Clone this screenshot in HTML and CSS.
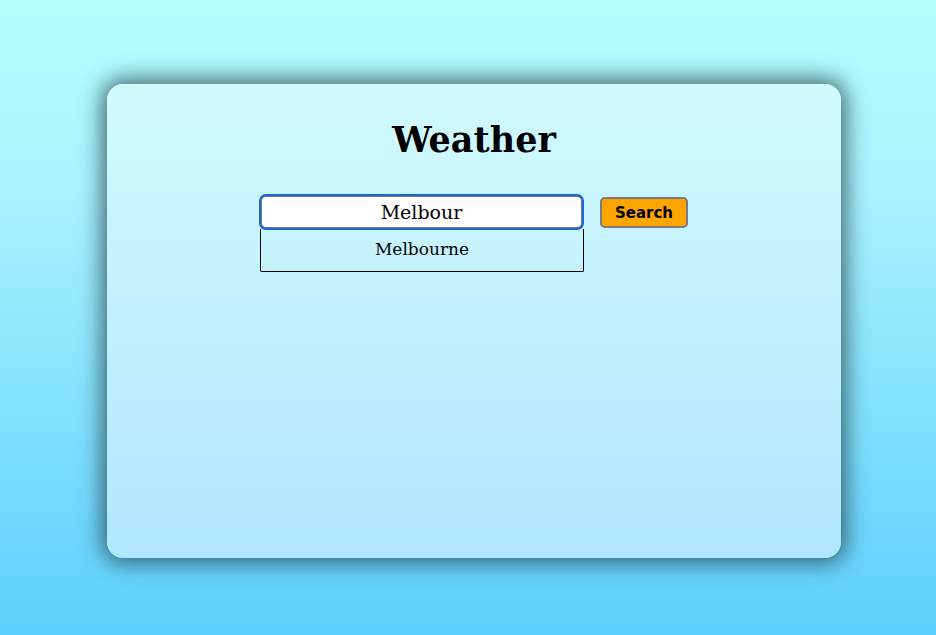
FILE: index.html
```html
<!DOCTYPE html>
<html lang="en">
<head>
<meta charset="utf-8">
<title>Weather</title>
<link rel="stylesheet" href="styles.css">
</head>
<body>
<main class="card">
  <h1 class="title">Weather</h1>
  <div class="search-row">
    <div class="search-box">
      <input class="city-input" type="text" value="Melbour">
      <ul class="suggestions">
        <li class="suggestion">Melbourne</li>
      </ul>
    </div>
    <button class="search-btn" type="button">Search</button>
  </div>
</main>
</body>
</html>
```

FILE: styles.css
```css
html, body {
  margin: 0;
  padding: 0;
  height: 100%;
}
body {
  background: linear-gradient(to bottom, #b4fffd 0%, #a9f3fd 30%, #5bcffd 100%);
  font-family: "DejaVu Serif", "Liberation Serif", serif;
  overflow: hidden;
}
.card {
  box-sizing: border-box;
  width: 734px;
  height: 474px;
  margin: 84px 0 0 107px;
  border-radius: 16px;
  background: linear-gradient(to bottom, #d1faff 0%, #b0e6fb 100%);
  box-shadow: 0 0 22px 5px rgba(40, 70, 80, 0.8);
  display: flex;
  flex-direction: column;
  align-items: center;
}
.title {
  margin: 32px 0 0 0;
  font-size: 35px;
  line-height: 48px;
  font-weight: bold;
  color: #000;
}
.search-row {
  display: flex;
  align-items: flex-start;
  gap: 16px;
  margin-top: 31px;
}
.search-box {
  display: flex;
  flex-direction: column;
  width: 324px;
}
.city-input {
  box-sizing: border-box;
  width: 323px;
  height: 34px;
  border: 2px solid #767676;
  border-radius: 6px;
  outline: 2px solid #1a67d8;
  outline-offset: -1px;
  background: #fff;
  font-family: "DejaVu Serif", "Liberation Serif", serif;
  font-size: 19px;
  text-align: center;
  color: #000;
  padding: 0;
}
.suggestions {
  list-style: none;
  margin: 0;
  padding: 0;
  box-sizing: border-box;
  width: 324px;
  border: 1px solid #000;
  border-top: none;
  border-radius: 0 0 2px 2px;
}
.suggestion {
  height: 42px;
  line-height: 41px;
  text-align: center;
  font-size: 17px;
  color: #000;
}
.search-btn {
  box-sizing: border-box;
  margin-top: 2px;
  width: 88px;
  height: 31px;
  background: #ffa500;
  border: 2px solid #7a7a80;
  border-radius: 5px;
  font-family: "DejaVu Sans", Verdana, sans-serif;
  font-weight: bold;
  font-size: 15px;
  color: #000;
  padding: 0;
}
```
